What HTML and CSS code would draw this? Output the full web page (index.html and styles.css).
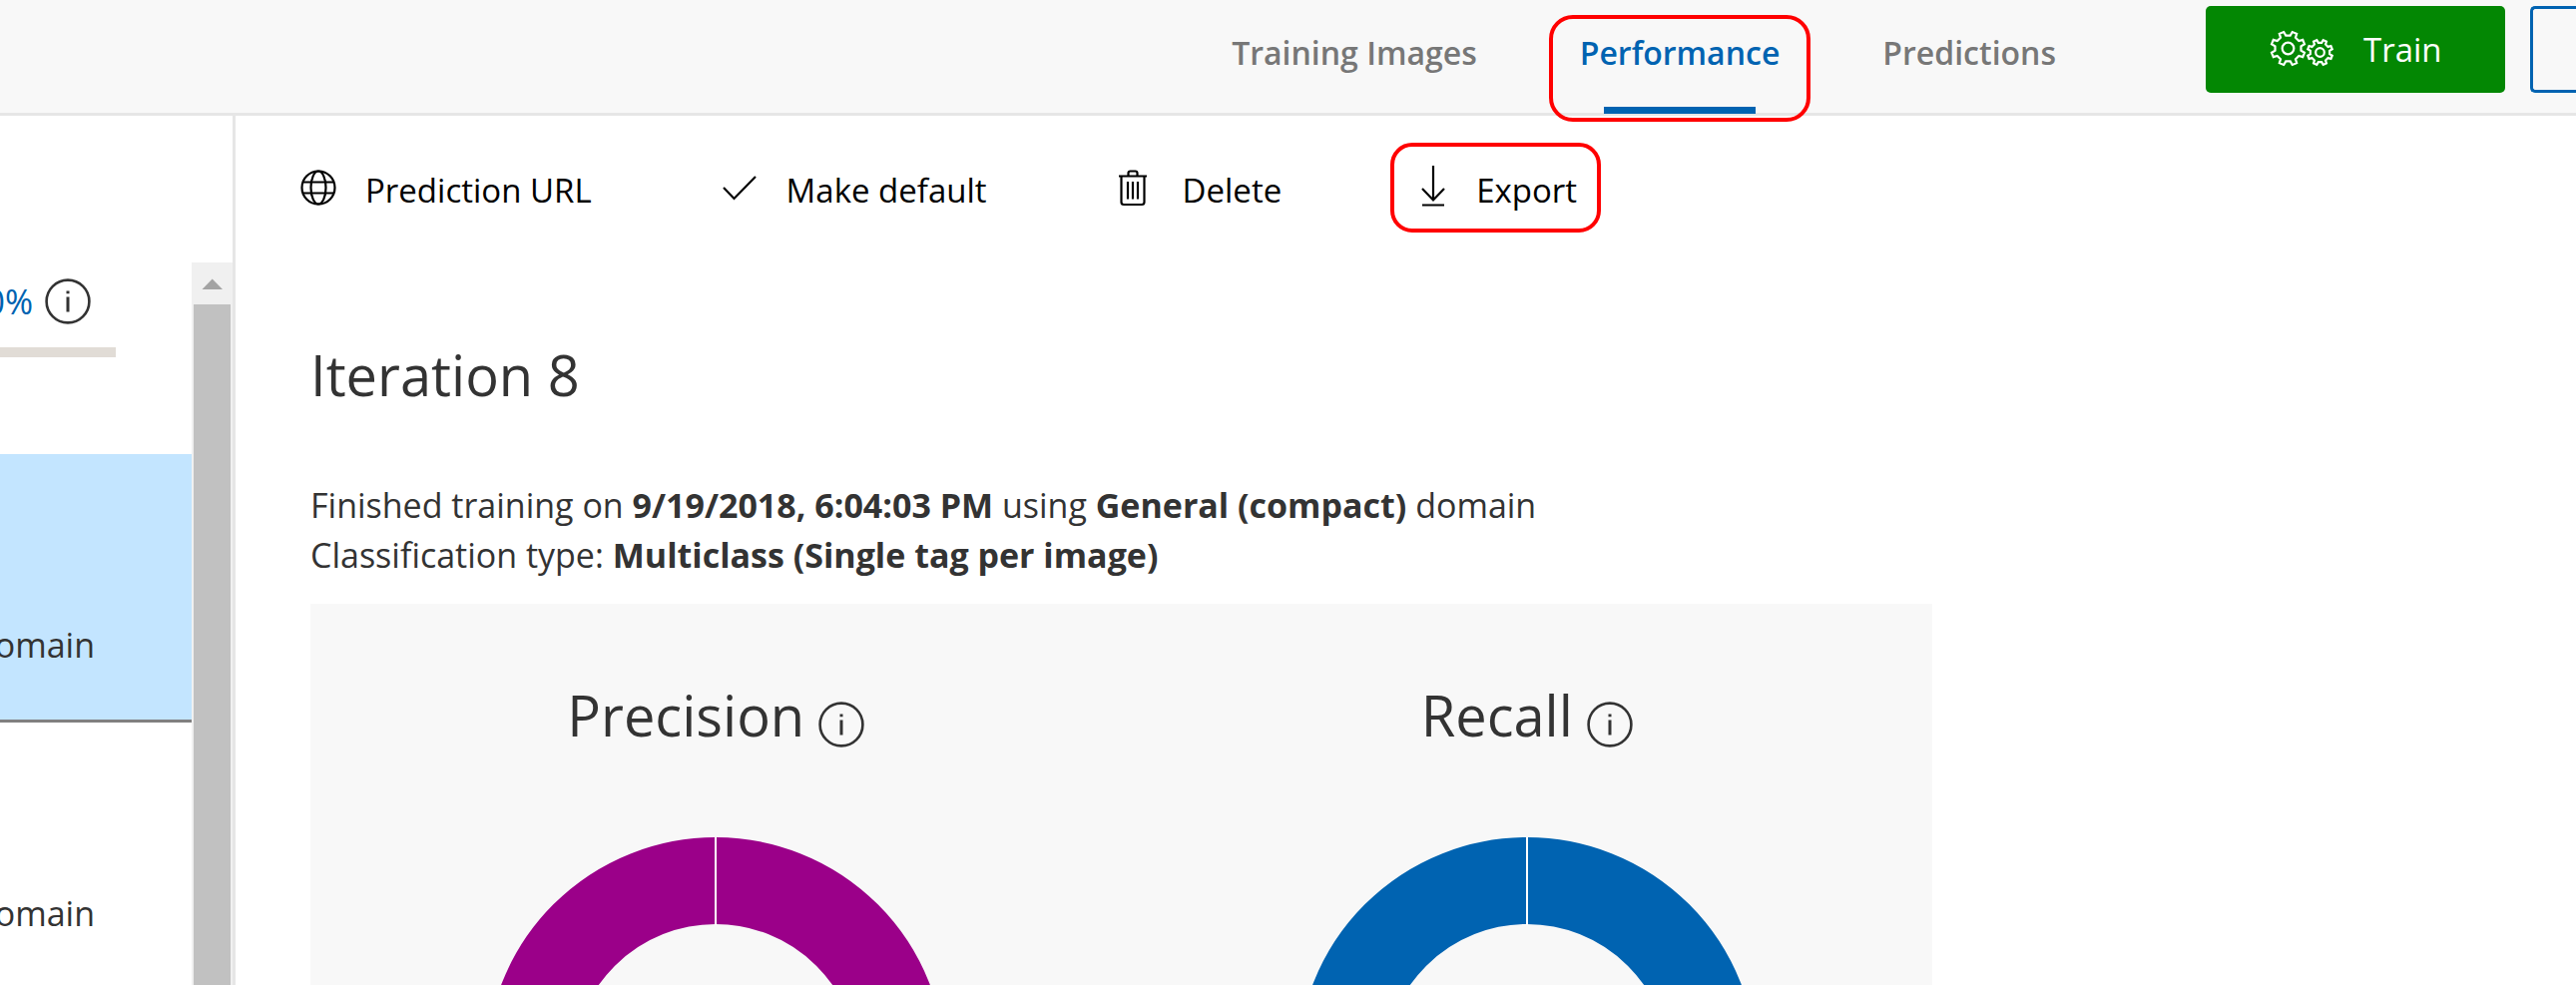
FILE: index.html
```html
<!DOCTYPE html>
<html lang="en">
<head>
<meta charset="utf-8">
<title>Performance</title>
<link rel="stylesheet" href="styles.css">
</head>
<body>
<svg class="defs" aria-hidden="true">
  <symbol id="gear" viewBox="-20 -20 40 40">
    <path vector-effect="non-scaling-stroke" d="M2.300-13.300 4.400-16.900 8.900-15.100 7.700-11.100 11.100-7.700 15.100-8.900 16.900-4.400 13.300-2.300 13.300 2.300 16.900 4.400 15.100 8.900 11.100 7.700 7.700 11.100 8.900 15.100 4.400 16.900 2.300 13.300-2.300 13.300-4.400 16.900-8.900 15.100-7.700 11.100-11.100 7.700-15.100 8.900-16.900 4.400-13.300 2.300-13.300-2.300-16.900-4.400-15.100-8.900-11.100-7.700-7.700-11.100-8.900-15.100-4.400-16.900-2.300-13.300Z"/>
    <circle r="6" vector-effect="non-scaling-stroke"/>
  </symbol>
  <symbol id="info" viewBox="0 0 46 46">
    <circle cx="23" cy="23" r="21.4" fill="none" stroke="currentColor" stroke-width="2.6"/>
    <path d="M23 18.5V33.5M23 12.5V15.3" fill="none" stroke="currentColor" stroke-width="3"/>
  </symbol>
</svg>
<header class="topbar">
  <nav class="tabs">
    <a class="tab" href="#images">Training Images</a>
    <a class="tab tab-active" href="#performance">Performance</a>
    <a class="tab" href="#predictions">Predictions</a>
  </nav>
  <div class="actions">
    <button class="train" type="button">
      <svg class="gears" viewBox="0 0 66 52" aria-hidden="true"><use href="#gear" x="0" y="5" width="39" height="39"/><use href="#gear" x="37" y="14" width="29" height="29"/></svg>
      Train
    </button>
    <button class="quick" type="button" aria-label="Quick test"></button>
  </div>
</header>
<div class="body">
  <aside class="sidebar">
    <div class="list">
      <section class="threshold">
        <div class="threshold-row">
          <span class="percent">50%</span>
          <svg class="info" role="img" aria-label="Info"><use href="#info"/></svg>
        </div>
        <div class="track"></div>
      </section>
      <div class="item item-selected"><span>domain</span></div>
      <div class="item"><span>domain</span></div>
    </div>
    <div class="scrollbar">
      <svg class="arrow" viewBox="0 0 40 42" aria-hidden="true"><path d="M10.500 27H31L20.700 16.500Z"/></svg>
      <div class="thumb"></div>
    </div>
  </aside>
  <main class="main">
    <div class="toolbar">
      <button class="tool tool-url" type="button">
        <svg class="icon" viewBox="0 0 38 38" aria-hidden="true"><circle cx="19" cy="19" r="16.500"/><ellipse cx="19" cy="19" rx="7.500" ry="16.500"/><path d="M3.500 13.500H34.500M3.500 24.500H34.500"/></svg>
        <span class="label">Prediction URL</span>
      </button>
      <button class="tool tool-default" type="button">
        <svg class="icon" viewBox="0 0 38 38" aria-hidden="true"><path d="M3 19 13.500 30 35 8"/></svg>
        <span class="label">Make default</span>
      </button>
      <button class="tool tool-delete" type="button">
        <svg class="icon" viewBox="0 0 38 38" aria-hidden="true"><path d="M5 7.500H33M7.500 7.500V33.500Q7.500 36 10 36H28Q30.500 36 30.500 33.500V7.500M14.500 7V4.500Q14.500 2.500 16.500 2.500H21.500Q23.500 2.500 23.500 4.500V7M14 13V30.500M19 13V30.500M24 13V30.500"/></svg>
        <span class="label">Delete</span>
      </button>
      <button class="tool tool-export" type="button">
        <svg class="icon" viewBox="0 0 38 38" aria-hidden="true"><path d="M19-3V32M8 20 19 31.500 30 20M8 36.500H30"/></svg>
        <span class="label">Export</span>
      </button>
    </div>
    <article class="report">
      <h1 class="title">Iteration 8</h1>
      <p class="summary">Finished training on <b>9/19/2018, 6:04:03 PM</b> using <b>General (compact)</b> domain<br>Classification type: <b>Multiclass (Single tag per image)</b></p>
      <div class="charts">
        <section class="chart precision">
          <h2 class="chart-title">Precision <svg class="info" role="img" aria-label="Info"><use href="#info"/></svg></h2>
          <svg class="donut" viewBox="0 0 460 460" aria-hidden="true"><circle cx="230" cy="230" r="186.500"/><path d="M230 0V88"/></svg>
        </section>
        <section class="chart recall">
          <h2 class="chart-title">Recall <svg class="info" role="img" aria-label="Info"><use href="#info"/></svg></h2>
          <svg class="donut" viewBox="0 0 460 460" aria-hidden="true"><circle cx="230" cy="230" r="186.500"/><path d="M230 0V88"/></svg>
        </section>
      </div>
    </article>
  </main>
</div>
</body>
</html>
```
FILE: styles.css
```css
* { box-sizing: border-box; }
html, body { height: 100%; }
body {
  margin: 0;
  display: flex;
  flex-direction: column;
  overflow: hidden;
  background: #fff;
  color: #333;
  font-family: "Segoe UI", "Open Sans", "Noto Sans", sans-serif;
  font-size: 34px;
}
button { font: inherit; color: inherit; background: none; border: 0; padding: 0; }
h1, h2, p { margin: 0; font-weight: 400; }
.defs { position: absolute; width: 0; height: 0; }

.topbar {
  flex: none;
  display: flex;
  justify-content: flex-end;
  align-items: flex-start;
  height: 116px;
  border-bottom: 3px solid #e6e6e6;
  background: #f8f8f8;
}
.tabs { display: flex; gap: 51px; margin-right: 124px; font-size: 32px; }
.tab {
  position: relative;
  padding: 0 26px;
  height: 107px;
  line-height: 106px;
  color: #777;
  font-weight: 600;
  text-decoration: none;
}
.tab-active { color: #0063b1; }
.tab-active::before {
  content: "";
  position: absolute;
  inset: 15px -5px -15px;
  border: 4px solid #f00;
  border-radius: 24px;
}
.tab-active::after {
  content: "";
  position: absolute;
  left: 50%;
  bottom: -7px;
  width: 152px;
  height: 7px;
  margin-left: -76px;
  background: #0063b1;
}
.actions { display: flex; gap: 25px; padding-top: 6px; }
.train {
  display: flex;
  align-items: center;
  gap: 29px;
  width: 300px;
  height: 87px;
  padding-left: 63px;
  border-radius: 5px;
  background: #038703;
  color: #fff;
  font-size: 33px;
}
.gears { width: 66px; height: 52px; fill: none; stroke: #fff; stroke-width: 2.2; }
.quick {
  width: 46px;
  height: 87px;
  border: 3px solid #0063b1;
  border-right: 0;
  border-radius: 5px 0 0 5px;
}

.body { flex: 1; display: flex; min-height: 0; }
.sidebar {
  flex: none;
  display: flex;
  width: 236px;
  border-right: 3px solid #e6e6e6;
}
.list { width: 192px; overflow: hidden; }
.threshold { height: 339px; padding-top: 163px; }
.threshold-row { display: flex; justify-content: flex-end; align-items: center; gap: 12px; width: 91px; height: 46px; color: #0063b1; }
.info { flex: none; width: 46px; height: 46px; color: #333; }
.track { width: 116px; height: 10px; margin-top: 23px; background: #e1dcd6; }
.item {
  display: flex;
  justify-content: flex-end;
  width: 192px;
  height: 269px;
  padding: 159px 97px 0 0;
  line-height: 64px;
  border-bottom: 3px solid #808080;
}
.item-selected { background: #c3e5ff; }
.scrollbar {
  display: flex;
  flex-direction: column;
  width: 41px;
  margin-top: 147px;
  background: #f0f0f0;
}
.arrow { flex: none; width: 40px; height: 42px; fill: #a3a3a3; }
.thumb { flex: 1; margin: 0 2px; background: #c1c1c1; }

.main { flex: 1; min-width: 0; }
.toolbar { display: flex; align-items: flex-start; padding: 27px 0 0 64px; color: #000; font-size: 33px; }
.tool { display: flex; align-items: center; height: 90px; white-space: nowrap; }
.label { padding-top: 4px; }
.icon { flex: none; width: 38px; height: 38px; overflow: visible; fill: none; stroke: #000; stroke-width: 2.2; }
.tool-url { gap: 28px; margin-right: 129px; }
.tool-default { gap: 28px; margin-right: 127px; }
.tool-delete { gap: 31px; margin-right: 109px; }
.tool-export { gap: 24px; padding: 0 20px; border: 4px solid #f00; border-radius: 22px; }

.report { padding: 100px 0 0 75px; }
.title { font-size: 56px; line-height: 84px; }
.summary { margin-top: 64px; line-height: 50px; white-space: nowrap; }
.charts {
  display: grid;
  grid-template-columns: 1fr 1fr;
  width: 72%;
  max-width: 1625px;
  margin-top: 24px;
  background: #f8f8f8;
}
.chart { display: flex; flex-direction: column; align-items: center; }
.chart-title {
  display: flex;
  align-items: center;
  gap: 14px;
  padding-top: 69px;
  font-size: 56px;
  line-height: 84px;
}
.chart-title .info { margin-top: 20px; }
.donut { width: 460px; height: 460px; margin-top: 81px; fill: none; stroke-width: 87; }
.donut path { stroke: #fff; stroke-width: 2; }
.precision .donut circle { stroke: #9b0089; }
.recall .donut circle { stroke: #0063b1; }
```
